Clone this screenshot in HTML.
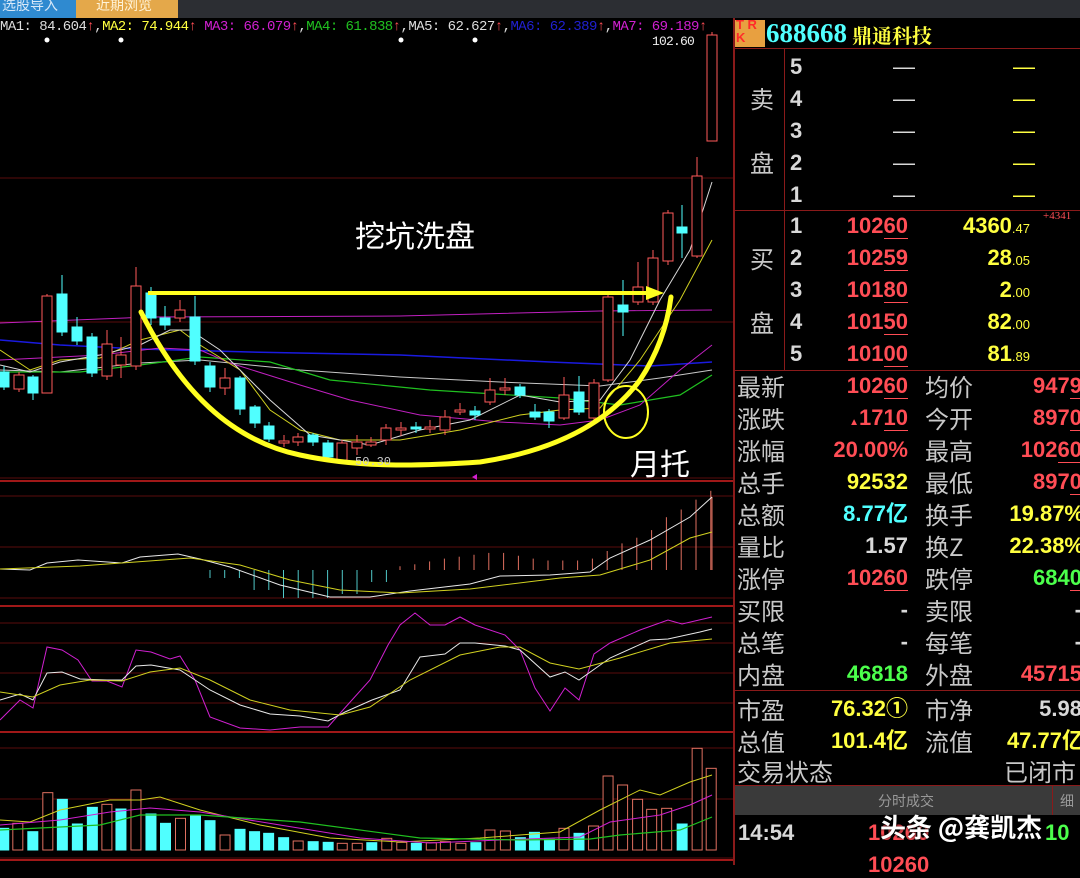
<!DOCTYPE html>
<html><head><meta charset="utf-8"><style>
*{margin:0;padding:0;box-sizing:border-box}
body{width:1080px;height:865px;background:#000;overflow:hidden;position:relative;font-family:"Liberation Sans","Noto Sans CJK SC",sans-serif}
.a{position:absolute;white-space:nowrap}
.lb{color:#c8c8c8;font-size:24px;font-family:"Noto Sans CJK SC",sans-serif;line-height:32px}
.v{font-weight:bold;font-size:22px;line-height:32px;text-align:right}
.r{color:#ff4d55}.y{color:#ffff40}.c{color:#50ffff}.g{color:#4cff4c}.w{color:#d8d8d8}
u{text-decoration:none;border-bottom:1px solid #ff4d55}
</style></head><body>
<div class="a" style="left:0;top:0;width:1080px;height:18px;background:#2c2e33"></div>
<div class="a" style="left:0;top:0;width:76px;height:18px;background:#2f8ad0;color:#d8e8f8;font-size:14px;line-height:10px;padding-left:2px;font-family:'Noto Sans CJK SC',sans-serif;overflow:hidden">选股导入</div>
<div class="a" style="left:76px;top:0;width:102px;height:18px;background:#e4a84a;color:#fff3d8;font-size:14px;line-height:10px;padding-left:20px;font-family:'Noto Sans CJK SC',sans-serif;overflow:hidden">近期浏览</div>
<div class="a" style="left:0;top:18px;font-family:'Liberation Mono',monospace;font-size:14px;line-height:18px;letter-spacing:-0.55px"><span style="color:#ddd">MA1: 84.604</span><span class="r">↑</span><span style="color:#ddd">,</span><span class="y">MA2: 74.944</span><span class="r">↑</span>,<span style="color:#d020d0">MA3: 66.079</span><span class="r">↑</span><span style="color:#ddd">,</span><span style="color:#20c020">MA4: 61.838</span><span class="r">↑</span><span style="color:#ddd">,MA5: 62.627</span><span class="r">↑</span><span style="color:#ddd">,</span><span style="color:#2020d0">MA6: 62.389</span><span class="r">↑</span><span style="color:#ddd">,</span><span style="color:#d020d0">MA7: 69.189</span><span class="r">↑</span></div>
<div class="a" style="left:652px;top:34px;color:#eee;font-family:'Liberation Mono',monospace;font-size:13px;letter-spacing:-0.8px">102.60</div>
<svg class="a" style="left:0;top:0" width="733" height="865" id="ch"></svg>
<div class="a" style="left:355px;top:212px;color:#fff;font-size:30px;font-family:'Noto Sans CJK SC',sans-serif">挖坑洗盘</div>
<div class="a" style="left:630px;top:440px;color:#fff;font-size:30px;font-family:'Noto Sans CJK SC',sans-serif">月托</div>
<div class="a" style="left:355px;top:455px;color:#ccc;font-size:12px;font-family:'Liberation Mono',monospace">50.30</div>

<div class="a" style="left:733px;top:18px;width:347px;height:847px;border-left:2px solid #8a1a1a"></div>
<div class="a" style="left:735px;top:20px;width:30px;height:27px;background:#e8a040"></div>
<div class="a" style="left:736px;top:18px;font-size:13px;line-height:13px;color:#ff2a2a;font-weight:bold">T R<br>K</div>
<div class="a c" style="left:766px;top:18px;font-size:27px;font-weight:bold;font-family:'Liberation Serif',serif">688668</div>
<div class="a y" style="left:852px;top:20px;font-size:20px;font-weight:bold;font-family:'Noto Serif CJK SC',serif">鼎通科技</div>
<div class="a" style="left:735px;top:48px;width:345px;border-top:1px solid #8a1a1a"></div>
<div class="a" style="left:735px;top:210px;width:345px;border-top:1px solid #8a1a1a"></div>
<div class="a" style="left:735px;top:370px;width:345px;border-top:1px solid #8a1a1a"></div>
<div class="a" style="left:784px;top:48px;height:322px;border-left:1px solid #8a1a1a"></div>
<div class="a lb" style="left:750px;top:82px">卖</div><div class="a lb" style="left:750px;top:146px">盘</div>
<div class="a lb" style="left:750px;top:242px">买</div><div class="a lb" style="left:750px;top:306px">盘</div>
<div id="ob"></div>
<div class="a" style="left:1043px;top:210px;color:#ff4d55;font-size:11px;font-family:'Liberation Serif',serif">+4341</div>
<div id="st"></div>
<div class="a" style="left:735px;top:690px;width:345px;border-top:1px solid #8a1a1a"></div>
<div class="a" style="left:735px;top:785px;width:345px;height:30px;background:#3a3a3a;border-top:1px solid #8a1a1a"></div>
<div class="a" style="left:878px;top:791px;color:#999;font-size:14px;font-family:'Noto Sans CJK SC',sans-serif">分时成交</div>
<div class="a" style="left:1052px;top:785px;height:30px;border-left:1px solid #8a1a1a"></div>
<div class="a" style="left:1060px;top:791px;color:#999;font-size:14px;font-family:'Noto Sans CJK SC',sans-serif">细</div>
<div class="a w" style="left:738px;top:820px;font-size:22px;font-weight:bold">14:54</div>
<div class="a r" style="left:868px;top:820px;font-size:22px;font-weight:bold">10260</div>
<div class="a r" style="left:868px;top:852px;font-size:22px;font-weight:bold">10260</div>
<div class="a g" style="left:1045px;top:820px;font-size:22px;font-weight:bold">10</div>
<div class="a" style="left:880px;top:808px;color:#fff;font-size:26px;font-weight:bold;font-family:'Noto Sans CJK SC',sans-serif;text-shadow:0 0 3px #000">头条 @龚凯杰</div>
<script>
const S='http://www.w3.org/2000/svg',svg=document.getElementById('ch');let h='';
const L=(x1,y1,x2,y2,c,w)=>h+=`<line x1="${x1}" y1="${y1}" x2="${x2}" y2="${y2}" stroke="${c}" stroke-width="${w||1}"/>`;
[178,322,478,481,496,547,598,606,623,643,673,703,732,748,799,858].forEach(y=>L(0,y,733,y,(y==481||y==606||y==732)?'#a01818':'#5a0c0c',(y==481||y==606||y==732)?2:1));
const R='#ff5a5a',C='#50ffff';
const cd=[[4,372,387,366,390,0],[19,375,389,372,392,1],[33,377,393,375,400,0],[47,296,393,294,393,1],[62,294,332,275,336,0],[77,327,341,317,345,0],[92,337,373,333,377,0],[107,344,376,330,380,1],[121,355,365,337,378,1],[136,286,366,267,370,1],[151,293,318,287,325,0],[165,318,325,306,330,0],[180,310,318,300,322,1],[195,317,361,296,365,0],[210,366,387,362,392,0],[225,378,388,368,395,1],[240,378,409,376,415,0],[255,407,423,405,428,0],[269,426,439,422,442,0],[284,441,443,435,447,1],[298,437,442,433,446,1],[313,435,442,433,446,0],[328,443,457,440,460,0],[342,443,460,440,462,1],[357,442,448,435,455,1],[371,442,445,437,447,1],[386,428,440,424,445,1],[401,428,430,422,436,1],[416,427,429,422,433,0],[430,427,429,420,433,1],[445,417,430,410,435,1],[460,410,412,403,415,1],[475,411,415,406,420,0],[490,390,402,378,405,1],[505,388,390,378,395,1],[520,387,395,384,398,0],[535,412,417,404,420,0],[549,412,421,409,428,0],[564,395,418,377,420,1],[579,392,412,376,415,0],[594,383,418,379,420,1],[608,297,380,292,382,1],[623,305,312,280,336,0],[638,287,302,262,305,1],[653,258,302,250,305,1],[668,213,261,210,265,1],[682,227,233,205,258,0],[697,176,256,157,258,1],[712,35,141,32,141,1]];
const P=(pts,c,w)=>h+=`<polyline fill="none" stroke="${c}" stroke-width="${w||1}" points="${pts.map(p=>p.join(',')).join(' ')}"/>`;
P([[0,323],[150,317],[400,316],[600,311],[712,310]],'#c020c0');
P([[0,340],[60,345],[140,349],[250,352],[400,355],[550,362],[650,366],[712,362]],'#1a1ae0',1.5);
P([[0,370],[60,372],[140,363],[200,360],[300,370],[400,377],[500,382],[600,386],[660,378],[712,370]],'#c8c8c8');
P([[0,372],[80,372],[140,365],[200,357],[270,362],[330,380],[430,390],[560,398],[620,405],[680,395],[712,375]],'#20c020',1.2);
P([[0,360],[100,355],[160,348],[200,350],[230,363],[300,385],[350,400],[420,415],[500,422],[560,425],[600,420],[640,405],[680,370],[712,345]],'#c020c0');
P([[0,350],[30,370],[60,360],[100,358],[140,340],[180,330],[200,345],[240,370],[270,410],[300,430],[340,440],[400,440],[460,430],[520,415],[560,410],[600,408],[640,360],[680,300],[712,240]],'#d0d020');
P([[0,365],[30,372],[60,362],[100,355],[140,345],[170,330],[190,330],[220,350],[240,370],[270,400],[310,435],[370,445],[420,430],[470,420],[520,395],[560,402],[600,400],[630,360],[660,300],[690,250],[712,182]],'#d8d8d8');
cd.forEach(d=>{const[x,t,b,wt,wb,r]=d;const c=r?R:C;L(x,wt,x,t,c);L(x,b,x,wb,c);
 h+=`<rect x="${x-5}" y="${t}" width="10" height="${Math.max(b-t,1)}" fill="${r?'#000':C}" stroke="${c}" stroke-width="1"/>`;});
h+=`<line x1="148" y1="293" x2="648" y2="293" stroke="#ffff20" stroke-width="4"/><polygon points="646,286 664,293 646,300" fill="#ffff20"/>`;
h+=`<path d="M141,312 C180,390 230,440 300,455 C360,468 420,466 480,462 C560,450 610,420 640,380 C660,350 668,320 671,297" fill="none" stroke="#ffff20" stroke-width="5" stroke-linecap="round"/>`;
h+=`<ellipse cx="626" cy="412" rx="22" ry="26" fill="none" stroke="#ffff20" stroke-width="2"/>`;
h+=`<polygon points="472,477 477,474 477,480" fill="#d020d0"/>`;
[[47,40],[121,40],[401,40],[475,40]].forEach(p=>h+=`<circle cx="${p[0]}" cy="${p[1]}" r="2.5" fill="#fff"/>`);
for(let x=210;x<=387;x+=14.7){const hh=x<240?8:x<270?20:x<330?28:x<360?24:12;L(x,570,x,570+hh,'#50c8c8')}
for(let i=0;i<22;i++){const x=400+i*14.8;const t=[4,6,9,12,14,16,18,18,15,12,10,10,10,12,20,28,34,42,48,55,64,72][i];L(x,570,x,570-t*(i>17?1.1:0.95),'#e07060')}
L(712,570,712,497,'#e07060');
P([[0,569],[30,570],[47,563],[78,560],[122,563],[140,557],[178,554],[200,559],[230,567],[280,585],[330,597],[370,597],[410,591],[470,584],[500,576],[550,575],[590,572],[610,558],[650,540],[690,517],[712,497]],'#e8e8e8');
P([[0,569],[80,566],[190,558],[240,565],[290,580],[340,590],[400,593],[470,589],[560,578],[600,575],[650,560],[690,538],[712,532]],'#d0d020');
P([[0,720],[20,700],[33,708],[47,647],[62,650],[78,660],[92,681],[107,681],[122,687],[136,650],[151,652],[170,659],[180,656],[195,680],[210,717],[240,728],[270,730],[300,727],[328,727],[343,710],[370,680],[388,645],[400,625],[415,613],[430,625],[445,625],[460,617],[475,625],[505,635],[520,650],[535,688],[550,711],[565,688],[579,700],[594,654],[610,643],[640,630],[668,620],[682,624],[712,617]],'#d020d0');
P([[0,700],[20,694],[33,700],[47,673],[62,672],[80,679],[107,680],[122,680],[136,666],[151,665],[180,670],[210,690],[240,705],[270,714],[300,716],[328,721],[345,712],[372,700],[400,690],[420,657],[445,654],[460,643],[475,643],[505,646],[520,650],[550,677],[565,672],[579,680],[610,658],[650,640],[668,639],[700,632],[712,629]],'#e8e8e8');
P([[0,692],[33,697],[60,685],[90,680],[122,681],[150,672],[180,668],[210,680],[250,700],[290,710],[340,715],[370,707],[410,680],[460,655],[500,647],[520,647],[550,663],[579,669],[620,658],[670,643],[712,639]],'#d0d020');
const vb=[[8,1075,0],[38,1060,1],[70,1085,0],[102,968,1],[133,988,0],[165,1062,0],[197,1012,0],[228,1003,1],[258,1017,0],[290,960,1],[322,1032,0],[353,1060,0],[385,1045,1],[417,1035,0],[448,1052,0],[480,1095,1],[512,1078,0],[543,1085,0],[573,1090,0],[605,1103,0],[636,1113,1],[668,1115,0],[700,1117,0],[730,1120,1],[762,1120,1],[793,1118,0],[825,1105,1],[857,1117,1],[888,1120,0],[920,1118,1],[950,1115,1],[983,1120,1],[1015,1118,0],[1045,1080,1],[1078,1083,1],[1110,1103,0],[1140,1087,0],[1172,1108,0],[1203,1075,1],[1235,1090,0],[1266,1068,1],[1297,918,1],[1328,945,1],[1360,988,1],[1390,1018,1],[1422,1015,1],[1455,1062,0],[1487,835,1],[1517,895,1]];
vb.forEach(v=>{const x=v[0]/2.133,t=470+v[1]/3;h+=`<rect x="${x-5}" y="${t}" width="10" height="${850-t}" fill="${v[2]?'#000':C}" stroke="${v[2]?'#e07060':C}"/>`});
P([[0,820],[30,822],[60,810],[110,800],[140,800],[160,797],[200,810],[260,825],[330,838],[400,842],[480,838],[560,832],[600,810],[640,790],[660,795],[690,782],[712,775]],'#d0d020');
P([[0,825],[60,820],[110,812],[150,808],[200,812],[280,825],[360,838],[430,843],[500,840],[580,837],[610,822],[660,815],[690,805],[712,795]],'#d020d0');
P([[0,830],[100,825],[140,815],[200,815],[300,822],[420,838],[520,840],[590,839],[620,835],[680,830],[712,817]],'#20c020',1.2);
L(0,860,733,860,'#a01818',2);
svg.innerHTML=h;
let o='';
[5,4,3,2,1].forEach((n,i)=>{const y=51+i*32;o+=`<div class="a v w" style="left:790px;top:${y}px">${n}</div><div class="a w" style="left:893px;top:${y}px;font-size:22px;line-height:32px">—</div><div class="a y" style="left:1013px;top:${y}px;font-size:22px;line-height:32px">—</div>`});
const b=[['102','60','4360','47'],['102','59','28','05'],['101','80','2','00'],['101','50','82','00'],['101','00','81','89']];
b.forEach((d,i)=>{const y=210+i*32;o+=`<div class="a v w" style="left:790px;top:${y}px">${i+1}</div><div class="a v r" style="left:820px;width:88px;top:${y}px">${d[0]}<u>${d[1]}</u></div><div class="a v y" style="left:900px;width:130px;top:${y}px">${d[2]}<span style="font-size:13px;font-weight:normal">.${d[3]}</span></div>`});
document.getElementById('ob').innerHTML=o;
const st=[['最新','<span class="r">102<u>60</u></span>','均价','<span class="r">947<u>9</u></span>'],['涨跌','<span class="r"><small style="font-size:10px">▲</small>17<u>10</u></span>','今开','<span class="r">897<u>0</u></span>'],['涨幅','<span class="r">20.00%</span>','最高','<span class="r">102<u>60</u></span>'],['总手','<span class="y">92532</span>','最低','<span class="r">897<u>0</u></span>'],['总额','<span class="c">8.77亿</span>','换手','<span class="y">19.87%</span>'],['量比','<span class="w">1.57</span>','换Z','<span class="y">22.38%</span>'],['涨停','<span class="r">102<u>60</u></span>','跌停','<span class="g">684<u>0</u></span>'],['买限','<span class="w">-</span>','卖限','<span class="w">-</span>'],['总笔','<span class="w">-</span>','每笔','<span class="w">-</span>'],['内盘','<span class="g">46818</span>','外盘','<span class="r">45715</span>'],['市盈','<span class="y">76.32①</span>','市净','<span class="w">5.98</span>'],['总值','<span class="y">101.4亿</span>','流值','<span class="y">47.77亿</span>']];
let s='';st.forEach((d,i)=>{const y=370+i*32+(i>=10?3:0);s+=`<div class="a lb" style="left:737px;top:${y}px">${d[0]}</div><div class="a v" style="left:800px;width:108px;top:${y}px">${d[1]}</div><div class="a lb" style="left:925px;top:${y}px">${d[2]}</div><div class="a v" style="left:960px;width:${(i==4||i==5||i==11)?124:122}px;top:${y}px">${d[3]}</div>`});
s+=`<div class="a lb" style="left:737px;top:755px">交易状态</div><div class="a lb" style="left:1004px;top:755px">已闭市</div>`;
document.getElementById('st').innerHTML=s;
</script>
</body></html>
